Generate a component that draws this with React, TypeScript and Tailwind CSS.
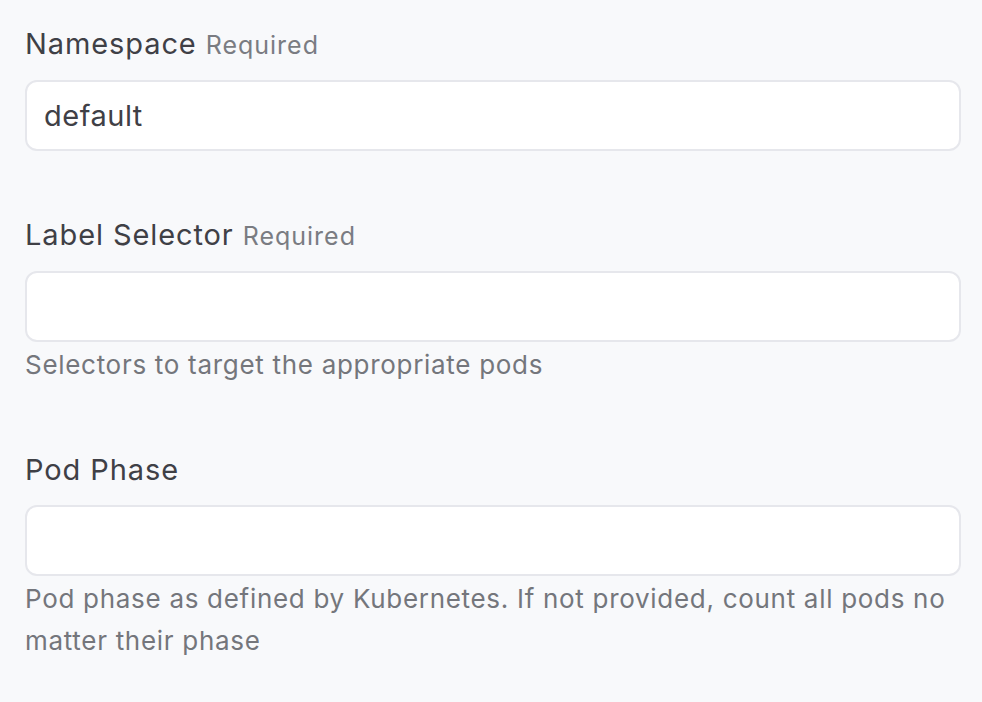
import React from 'react'

const FIELDS = [
  { id: 'namespace', label: 'Namespace', required: true, value: 'default', help: '' },
  {
    id: 'labelSelector',
    label: 'Label Selector',
    required: true,
    value: '',
    help: 'Selectors to target the appropriate pods',
  },
  {
    id: 'podPhase',
    label: 'Pod Phase',
    required: false,
    value: '',
    help: 'Pod phase as defined by Kubernetes. If not provided, count all pods no matter their phase',
  },
]

export default function App() {
  return (
    <div
      className="min-h-[702px] w-full bg-[#f8f9fb] pl-[25px] pr-[21px] pt-[27px]"
      style={{ fontFamily: 'Inter, "Noto Sans", sans-serif' }}
    >
      {FIELDS.map((field) => (
        <div key={field.id} className="mb-[67px] flex flex-col">
          {/* Label */}
          <label htmlFor={field.id} className="flex items-baseline gap-[9px] leading-[34px]">
            <span className="text-[29px] tracking-[0.9px] text-[#3f4046]">{field.label}</span>
            {field.required && (
              <span className="text-[25px] tracking-[1px] text-[#7a7c82]">Required</span>
            )}
          </label>

          {/* Champ */}
          <input
            id={field.id}
            defaultValue={field.value}
            className="mt-[18px] h-[71px] w-full rounded-[12px] border-2 border-[#e6e7ec] bg-white px-[17px] text-[29px] tracking-[0.5px] text-[#3f4046] outline-none"
          />

          {field.help && (
            <p className="mt-[2px] text-[26px] leading-[42px] tracking-[0.7px] text-[#74767c]">
              {field.help}
            </p>
          )}
        </div>
      ))}
    </div>
  )
}
